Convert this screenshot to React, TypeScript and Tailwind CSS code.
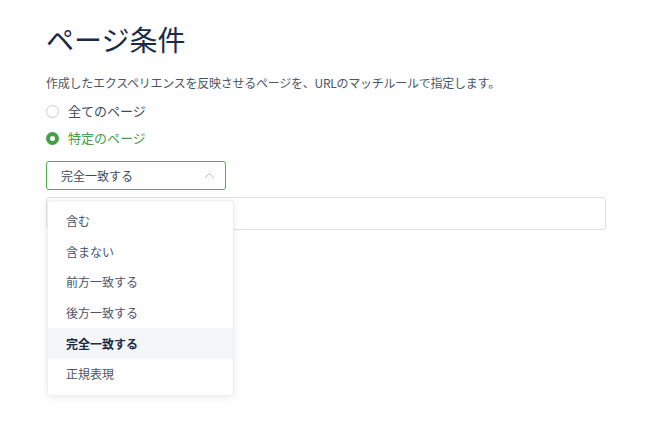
import React, { useState } from 'react';

const options = ['含む', '含まない', '前方一致する', '後方一致する', '完全一致する', '正規表現'];

export default function App() {
  const [mode, setMode] = useState<'all' | 'specific'>('specific');
  const [match, setMatch] = useState('完全一致する');
  const [open, setOpen] = useState(true);

  return (
    <div
      className="w-[652px] h-[437px] bg-white px-[46px] pt-[19px] text-[#3d4a5c]"
      style={{ fontFamily: '"Noto Sans CJK JP", "Noto Sans", sans-serif' }}
    >
      <h1 className="text-[28px] leading-[40px] text-[#1b2a49] font-normal">ページ条件</h1>
      <p className="mt-[16px] text-[12px] leading-[16px] tracking-[-0.25px] text-[#4a5568]">
        作成したエクスペリエンスを反映させるページを、URLのマッチルールで指定します。
      </p>

      <div className="mt-[11px] flex flex-col gap-[9px]">
        <label className="flex items-center gap-[9px] h-[18px] cursor-pointer" onClick={() => setMode('all')}>
          <span
            className={
              mode === 'all'
                ? 'w-[13px] h-[13px] rounded-full bg-[#43a047] flex items-center justify-center'
                : 'w-[13px] h-[13px] rounded-full border border-[#c8cdd5] bg-white'
            }
          >
            {mode === 'all' && <span className="w-[5px] h-[5px] rounded-full bg-white" />}
          </span>
          <span className={mode === 'all' ? 'text-[13px] text-[#43a047]' : 'text-[13px] text-[#3d4a5c]'}>全てのページ</span>
        </label>
        <label className="flex items-center gap-[9px] h-[18px] cursor-pointer" onClick={() => setMode('specific')}>
          <span
            className={
              mode === 'specific'
                ? 'w-[13px] h-[13px] rounded-full bg-[#43a047] flex items-center justify-center'
                : 'w-[13px] h-[13px] rounded-full border border-[#c8cdd5] bg-white'
            }
          >
            {mode === 'specific' && <span className="w-[5px] h-[5px] rounded-full bg-white" />}
          </span>
          <span className={mode === 'specific' ? 'text-[13px] text-[#43a047]' : 'text-[13px] text-[#3d4a5c]'}>特定のページ</span>
        </label>
      </div>

      <div className="relative mt-[14px]">
        <button
          className="w-[180px] h-[29px] border border-[#4caf50] rounded-[3px] flex items-center justify-between pl-[14px] pr-[10px] text-[12px] text-[#3d4a5c] bg-white"
          onClick={() => setOpen(!open)}
        >
          <span>{match}</span>
          <svg width="11" height="7" viewBox="0 0 11 7" fill="none">
            <path d="M1 6 L5.5 1.5 L10 6" stroke="#b8bec8" strokeWidth="1" />
          </svg>
        </button>

        <div className="mt-[7px] w-[560px] h-[33px] border border-[#dcdfe4] rounded-[3px]" />

        {open && (
          <div className="absolute left-[1px] top-[39px] w-[187px] bg-white rounded-[4px] border border-[#eceef2] shadow-[0_2px_8px_rgba(0,0,0,0.08)] py-[5px]">
            {options.map((o) => (
              <div
                key={o}
                className={
                  o === match
                    ? 'h-[30.6px] flex items-center pl-[18px] text-[12px] font-bold text-[#1b2a49] bg-[#f5f6fa] cursor-pointer'
                    : 'h-[30.6px] flex items-center pl-[18px] text-[12px] text-[#4a5568] cursor-pointer'
                }
                onClick={() => {
                  setMatch(o);
                  setOpen(false);
                }}
              >
                {o}
              </div>
            ))}
          </div>
        )}
      </div>
    </div>
  );
}
